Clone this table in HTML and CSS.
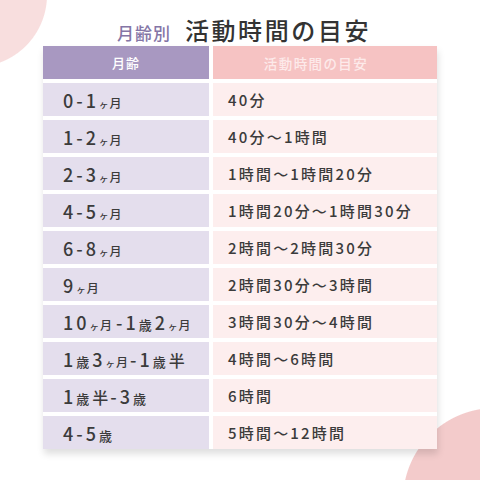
FILE: index.html
```html
<!DOCTYPE html>
<html lang="ja">
<head>
<meta charset="utf-8">
<link rel="stylesheet" href="styles.css">
</head>
<body>
<main class="page">
  <h1 class="title"><span class="sub">月齢別</span><span class="main">活動時間の目安</span></h1>
  <div class="table">
    <div class="hd hd-age">月齢</div>
    <div class="hd hd-time">活動時間の目安</div>

    <div class="cell age"><span class="n">0-1</span><span class="k">ヶ</span><span class="u">月</span></div>
    <div class="cell time">40分</div>

    <div class="cell age"><span class="n">1-2</span><span class="k">ヶ</span><span class="u">月</span></div>
    <div class="cell time">40分～1時間</div>

    <div class="cell age"><span class="n">2-3</span><span class="k">ヶ</span><span class="u">月</span></div>
    <div class="cell time">1時間～1時間20分</div>

    <div class="cell age"><span class="n">4-5</span><span class="k">ヶ</span><span class="u">月</span></div>
    <div class="cell time">1時間20分～1時間30分</div>

    <div class="cell age"><span class="n">6-8</span><span class="k">ヶ</span><span class="u">月</span></div>
    <div class="cell time">2時間～2時間30分</div>

    <div class="cell age"><span class="n">9</span><span class="k">ヶ</span><span class="u">月</span></div>
    <div class="cell time">2時間30分～3時間</div>

    <div class="cell age"><span class="n">10</span><span class="k">ヶ</span><span class="u">月</span><span class="n dash">-1</span><span class="y">歳</span><span class="n">2</span><span class="k">ヶ</span><span class="u">月</span></div>
    <div class="cell time">3時間30分～4時間</div>

    <div class="cell age"><span class="n">1</span><span class="y">歳</span><span class="n">3</span><span class="k">ヶ</span><span class="u">月</span><span class="n">-1</span><span class="y">歳</span><span class="h">半</span></div>
    <div class="cell time">4時間～6時間</div>

    <div class="cell age"><span class="n">1</span><span class="y">歳</span><span class="h">半</span><span class="n">-3</span><span class="y">歳</span></div>
    <div class="cell time">6時間</div>

    <div class="cell age"><span class="n">4-5</span><span class="y">歳</span></div>
    <div class="cell time">5時間～12時間</div>
  </div>
</main>
</body>
</html>
```
FILE: styles.css
```css
* { box-sizing: border-box; }
html, body {
  margin: 0;
  padding: 0;
  width: 480px;
  height: 480px;
  overflow: hidden;
}
body {
  font-family: "Noto Sans CJK JP", "Noto Sans", sans-serif;
  color: #3b3b3b;
  background:
    radial-gradient(circle 72px at -25px -5px, #f8dede 71.5px, rgba(248, 222, 222, 0) 72.5px),
    radial-gradient(circle 92px at 495px 500px, #f3cbcb 91.5px, rgba(243, 203, 203, 0) 92.5px),
    #ffffff;
}
.page {
  padding-top: 14px;
}
.title {
  margin: 0;
  height: 32px;
  display: flex;
  justify-content: center;
  align-items: baseline;
  gap: 14px;
  font-weight: 500;
  line-height: 32px;
  padding-left: 8px;
}
.title .sub {
  font-size: 17px;
  color: #8475a6;
  letter-spacing: 1px;
}
.title .main {
  font-size: 24px;
  color: #333333;
  letter-spacing: 2.6px;
}
.table {
  margin-left: 43px;
  width: 394px;
  display: grid;
  grid-template-columns: 166px 224px;
  grid-auto-rows: 33px;
  gap: 4px;
  background: #ffffff;
  box-shadow: 1px 5px 7px rgba(0, 0, 0, 0.13);
}
.hd {
  display: flex;
  align-items: center;
  justify-content: center;
  font-size: 13px;
  font-weight: 500;
  color: #ffffff;
  letter-spacing: 1px;
}
.hd-age { background: #a898c1; }
.hd-time {
  background: #f6c3c3;
  color: #fdeaea;
  font-size: 13.5px;
  letter-spacing: 1.4px;
  padding-right: 18px;
}
.cell {
  display: flex;
  align-items: center;
  font-weight: 500;
  color: #3b3b3b;
}
.age {
  background: #e4deed;
  padding-left: 20px;
  align-items: baseline;
  padding-top: 6px;
}
.time {
  background: #fdeeee;
  padding-left: 15px;
  font-size: 15px;
  letter-spacing: 2.2px;
}
.n {
  font-size: 18px;
  letter-spacing: 3px;
  line-height: 22px;
}
.k {
  font-size: 9.5px;
  margin-right: 1px;
}
.u {
  font-size: 12px;
  margin-right: 2px;
}
.y {
  font-size: 13px;
  margin-right: 3px;
}
.h {
  font-size: 16px;
  margin-right: 2px;
}
.dash { margin-left: 2px; }
```
